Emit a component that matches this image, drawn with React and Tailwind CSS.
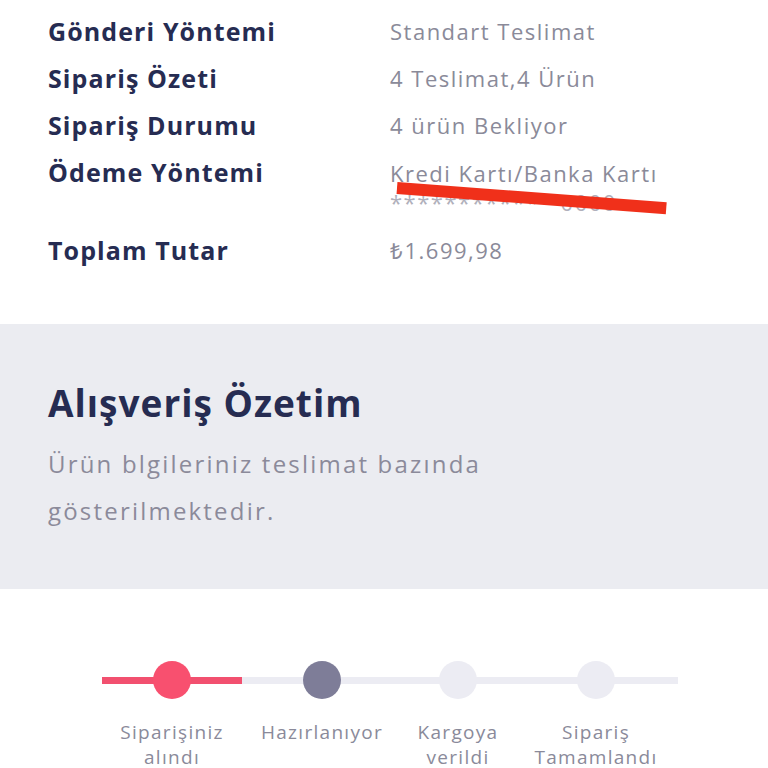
import React from 'react';

const rows = [
  { label: 'Gönderi Yöntemi', value: 'Standart Teslimat' },
  { label: 'Sipariş Özeti', value: '4 Teslimat,4 Ürün' },
  { label: 'Sipariş Durumu', value: '4 ürün Bekliyor' },
];

const steps = [
  { lines: ['Siparişiniz', 'alındı'], width: 'w-[140px]', line: 'bg-[#f2506f]', dot: 'bg-[#f8506f]' },
  { lines: ['Hazırlanıyor'], width: 'w-[160px]', line: 'bg-[#ececf3]', dot: 'bg-[#7e7d98]' },
  { lines: ['Kargoya', 'verildi'], width: 'w-[112px]', line: 'bg-[#ececf3]', dot: 'bg-[#ececf3]' },
  { lines: ['Sipariş', 'Tamamlandı'], width: 'w-[164px]', line: 'bg-[#ececf3]', dot: 'bg-[#ececf3]' },
];

export default function App() {
  return (
    <div className="w-[768px] h-[768px] overflow-hidden bg-white font-['Open_Sans',sans-serif]">
      {/* Sipariş detayları */}
      <div className="px-[48px] pt-[8px] pb-[50px]">
        {rows.map(r => (
          <div key={r.label} className="flex leading-[47px]">
            <div className="w-[342px] text-[25px] font-bold text-[#262c52] tracking-[1.1px]">{r.label}</div>
            <div className="text-[22px] text-[#8a8a99] tracking-[1.5px]">{r.value}</div>
          </div>
        ))}
        <div className="flex">
          <div className="w-[342px] leading-[47px] text-[25px] font-bold text-[#262c52] tracking-[1.1px]">Ödeme Yöntemi</div>
          <div className="relative pt-[10px] text-[22px] leading-[29px] text-[#8a8a99] tracking-[1.5px]">
            <div>Kredi Kartı/Banka Kartı</div>
            <div className="text-[#b0b0bb]">************ 0000</div>
            <div className="absolute left-[7px] top-[33px] w-[270px] h-[12px] bg-[#f0301a] origin-left rotate-[4.3deg]" />
          </div>
        </div>
        <div className="flex mt-[10px] leading-[47px]">
          <div className="w-[342px] text-[25px] font-bold text-[#262c52] tracking-[1.1px]">Toplam Tutar</div>
          <div className="text-[22px] text-[#8a8a99] tracking-[1.5px]">₺1.699,98</div>
        </div>
      </div>

      {/* Alışveriş özeti */}
      <div className="bg-[#ebecf1] px-[48px] pt-[57px] pb-[55px]">
        <h2 className="text-[37px] leading-[44px] font-bold text-[#262c52] tracking-[1px]">Alışveriş Özetim</h2>
        <p className="mt-[15px] text-[24px] leading-[47px] text-[#8b8a9a] tracking-[2.2px]">
          Ürün blgileriniz teslimat bazında<br />gösterilmektedir.
        </p>
      </div>

      {/* Sipariş adımları */}
      <div className="flex pl-[102px] pt-[72px]">
        {steps.map((s, i) => (
          <div key={i} className={`${s.width} flex flex-col items-center`}>
            <div className="relative w-full h-[38px] flex items-center justify-center">
              <div className={`absolute left-0 right-0 top-[16px] h-[7px] ${s.line}`} />
              <div className={`relative w-[38px] h-[38px] rounded-full ${s.dot}`} />
            </div>
            <div className="mt-[21px] text-center text-[19px] leading-[25px] text-[#8a8a9a] tracking-[1.3px] whitespace-nowrap">
              {s.lines.map(l => <div key={l}>{l}</div>)}
            </div>
          </div>
        ))}
      </div>
    </div>
  );
}
